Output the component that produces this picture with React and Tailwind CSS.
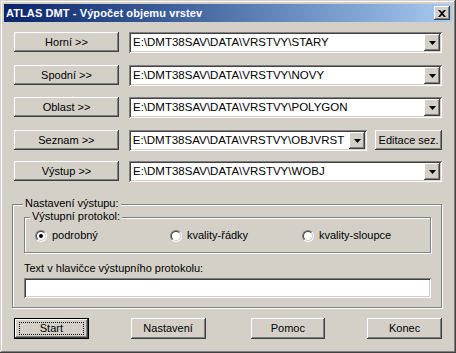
import React from 'react';

const raised =
  'bg-[#d4d0c8] shadow-[inset_-1px_-1px_#404040,inset_1px_1px_#ffffff,inset_-2px_-2px_#808080,inset_2px_2px_#d4d0c8]';
const sunken =
  'bg-white shadow-[inset_1px_1px_#808080,inset_-1px_-1px_#ffffff,inset_2px_2px_#404040,inset_-2px_-2px_#d4d0c8]';

const Button = ({ label, className = '', isDefault = false }) => (
  <div
    className={`flex items-center justify-center text-black ${className} ${
      isDefault
        ? 'bg-[#d4d0c8] border border-black shadow-[inset_-1px_-1px_#404040,inset_1px_1px_#ffffff,inset_-2px_-2px_#808080]'
        : raised
    }`}
  >
    {isDefault ? (
      <span className="w-[calc(100%-8px)] h-[13px] border border-dotted border-black flex items-center justify-center">
        {label}
      </span>
    ) : (
      label
    )}
  </div>
);

const Arrow = () => (
  <div className={`w-[16px] h-[17px] flex items-center justify-center ${raised}`}>
    <svg width="7" height="4" viewBox="0 0 7 4">
      <path d="M0 0h7L3.5 4z" fill="black" />
    </svg>
  </div>
);

const Combo = ({ value, className = '' }) => (
  <div className={`h-[21px] flex items-center p-[2px] ${sunken} ${className}`}>
    <span className="flex-1 pl-[2px] leading-none text-[11.5px] whitespace-nowrap overflow-hidden">{value}</span>
    <Arrow />
  </div>
);

const Radio = ({ label, checked }) => (
  <div className="flex items-center gap-[5px]">
    <div className="w-[12px] h-[12px] rounded-full border border-t-[#808080] border-l-[#808080] border-b-white border-r-white">
      <div className="w-full h-full rounded-full border border-t-[#404040] border-l-[#404040] border-b-[#d4d0c8] border-r-[#d4d0c8] bg-white flex items-center justify-center">
        {checked && <div className="w-[4px] h-[4px] rounded-full bg-black" />}
      </div>
    </div>
    <span>{label}</span>
  </div>
);

const Group = ({ title, className = '', labelPos = 'left-[10px]', children }) => (
  <div
    className={`relative border border-[#808080] shadow-[1px_1px_0_#ffffff,inset_1px_1px_0_#ffffff] ${className}`}
  >
    <span className={`absolute -top-[9px] ${labelPos} bg-[#d4d0c8] px-[2px] leading-[14px]`}>{title}</span>
    {children}
  </div>
);

const rows = [
  { label: 'Horní >>', value: 'E:\\DMT38SAV\\DATA\\VRSTVY\\STARY', mt: 'mt-[10px]' },
  { label: 'Spodní >>', value: 'E:\\DMT38SAV\\DATA\\VRSTVY\\NOVY', mt: 'mt-[12px]' },
  { label: 'Oblast >>', value: 'E:\\DMT38SAV\\DATA\\VRSTVY\\POLYGON', mt: 'mt-[11px]' },
];

export default function App() {
  return (
    <div
      className="w-[456px] h-[353px] p-[4px] flex flex-col bg-[#d4d0c8] text-[11px] text-black shadow-[inset_-1px_-1px_#404040,inset_1px_1px_#d4d0c8,inset_-2px_-2px_#808080,inset_2px_2px_#ffffff]"
      style={{ fontFamily: '"Liberation Sans", Arial, sans-serif' }}
    >
      <div className="h-[18px] flex items-center justify-between pl-[2px] pr-[2px] bg-gradient-to-r from-[#0a246a] to-[#a6caf0]">
        <span className="text-white font-bold text-[11px] tracking-[0.1px]">ATLAS DMT - Výpočet objemu vrstev</span>
        <div className={`w-[16px] h-[14px] flex items-center justify-center ${raised}`}>
          <svg width="8" height="7" viewBox="0 0 8 7">
            <path d="M0 0h2l2 2 2-2h2L5 3.5 8 7H6L4 5 2 7H0l3-3.5z" fill="black" />
          </svg>
        </div>
      </div>

      <div className="flex-1 flex flex-col px-[10px]">
        {rows.map((r) => (
          <div key={r.label} className={`flex items-start gap-[10px] ${r.mt}`}>
            <Button label={r.label} className="w-[105px] h-[20px]" />
            <Combo value={r.value} className="flex-1" />
          </div>
        ))}

        <div className="flex items-start gap-[10px] mt-[12px]">
          <Button label="Seznam >>" className="w-[105px] h-[20px]" />
          <Combo value="E:\DMT38SAV\DATA\VRSTVY\OBJVRST" className="w-[239px]" />
          <Button label="Editace sez." className="w-[67px] h-[20px] ml-[-2px]" />
        </div>

        <div className="flex items-start gap-[10px] mt-[10px]">
          <Button label="Výstup >>" className="w-[105px] h-[20px]" />
          <Combo value="E:\DMT38SAV\DATA\VRSTVY\WOBJ" className="flex-1" />
        </div>

        <Group
          title="Nastavení výstupu:"
          labelPos="left-[10px]"
          className="mt-[22px] ml-[-2px] h-[104px] pl-[11px] pr-[10px] pt-[12px]"
        >
          <Group title="Výstupní protokol:" labelPos="left-[5px]" className="h-[36px] flex items-center">
            <div className="w-full flex items-center pl-[10px] pt-[1px]">
              <div className="w-[135px]"><Radio label="podrobný" checked /></div>
              <div className="w-[132px]"><Radio label="kvality-řádky" /></div>
              <Radio label="kvality-sloupce" />
            </div>
          </Group>
          <div className="mt-[8px] leading-[14px]">Text v hlavičce výstupního protokolu:</div>
          <div className={`mt-[3px] h-[20px] ${sunken}`} />
        </Group>

        <div className="flex mt-[10px]">
          <Button label="Start" className="w-[75px] h-[21px]" isDefault />
          <Button label="Nastavení" className="w-[75px] h-[21px] ml-[42px]" />
          <Button label="Pomoc" className="w-[75px] h-[21px] ml-[45px]" />
          <Button label="Konec" className="w-[75px] h-[21px] ml-[42px]" />
        </div>
      </div>
    </div>
  );
}
